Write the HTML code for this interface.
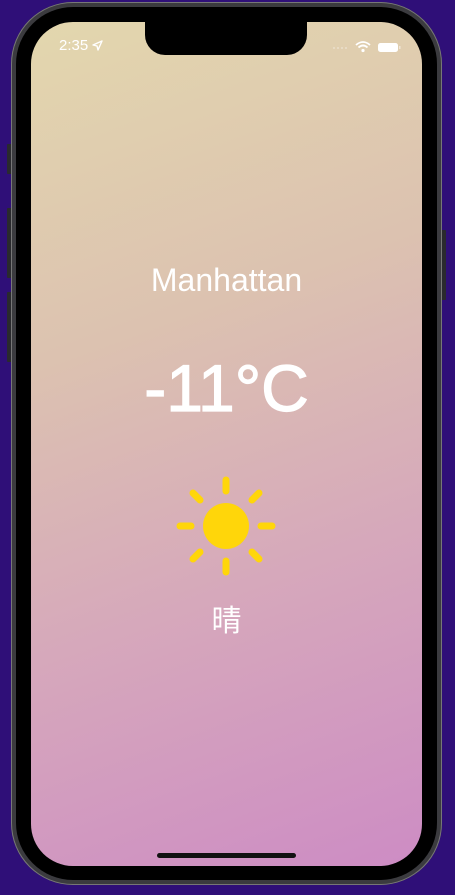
<!DOCTYPE html>
<html><head><meta charset="utf-8"><style>
html,body{margin:0;padding:0}
body{width:455px;height:895px;background:#2f0f78;position:relative;overflow:hidden;font-family:"Liberation Sans","Noto Sans CJK SC",sans-serif}
.btn{position:absolute;background:#2a2a2e;border-radius:1px}
.phone{position:absolute;left:11px;top:2px;width:431px;height:883px;border-radius:62px;background:#3b3b3f;box-shadow:inset 0 0 0 1px #777}
.bezel{position:absolute;left:16px;top:7px;width:421px;height:873px;border-radius:57px;background:#000}
.screen{position:absolute;left:31px;top:22px;width:391px;height:844px;border-radius:42px;overflow:hidden;background:linear-gradient(160deg,#e3d7ae 0%,#dcc2b0 35%,#d6a8bb 65%,#cd8cc4 100%)}
.notch{position:absolute;left:114px;top:0;width:162px;height:33px;background:#000;border-radius:0 0 20px 20px}
.time{position:absolute;left:28px;top:15px;color:#fff;font-size:15px}
.t{position:absolute;left:0;width:391px;text-align:center;color:#fff}
.home{position:absolute;left:126px;bottom:8px;width:139px;height:5px;border-radius:3px;background:#111}
</style></head><body>
<div class="btn" style="left:7px;top:144px;width:5px;height:30px"></div>
<div class="btn" style="left:7px;top:208px;width:5px;height:70px"></div>
<div class="btn" style="left:7px;top:292px;width:5px;height:70px"></div>
<div class="btn" style="left:441px;top:230px;width:5px;height:70px"></div>
<div class="phone"></div>
<div class="bezel"></div>
<div class="screen">
 <div class="notch"></div>
 <div class="time">2:35 <svg width="11" height="11" viewBox="0 0 11 11" style="vertical-align:-1px"><path d="M1 5 L10 1 L6 10 L5 6 Z" fill="none" stroke="#fff" stroke-width="1.4" stroke-linejoin="round"/></svg></div>
 <svg style="position:absolute;left:300px;top:18px" width="80" height="14" viewBox="0 0 80 14">
  <g fill="#fff" opacity=".35"><circle cx="3" cy="8" r="1"/><circle cx="7" cy="8" r="1"/><circle cx="11" cy="8" r="1"/><circle cx="15" cy="8" r="1"/></g>
  <path d="M25 5 Q32 -1 39 5" stroke="#fff" stroke-width="1.8" fill="none"/>
  <path d="M27.5 7.5 Q32 3.5 36.5 7.5" stroke="#fff" stroke-width="1.8" fill="none"/>
  <circle cx="32" cy="10.5" r="1.6" fill="#fff"/>
  <rect x="47" y="3" width="20" height="9" rx="2.5" fill="#fff"/>
  <rect x="68" y="6" width="1.5" height="3" fill="#fff" opacity=".5"/>
 </svg>
 <div class="t" style="top:240px;font-size:32px">Manhattan</div>
 <div class="t" style="top:328px;font-size:66px;-webkit-text-stroke:1.2px #fff">-11°C</div>
 <svg style="position:absolute;left:145px;top:454px" width="100" height="100" viewBox="0 0 100 100">
  <circle cx="50" cy="50" r="23" fill="#ffd60a"/>
  <g stroke="#ffd60a" stroke-width="7" stroke-linecap="round">
   <line x1="50" y1="4" x2="50" y2="15"/><line x1="50" y1="85" x2="50" y2="96"/>
   <line x1="4" y1="50" x2="15" y2="50"/><line x1="85" y1="50" x2="96" y2="50"/>
   <line x1="17" y1="17" x2="24" y2="24"/><line x1="76" y1="76" x2="83" y2="83"/>
   <line x1="83" y1="17" x2="76" y2="24"/><line x1="17" y1="83" x2="24" y2="76"/>
  </g>
 </svg>
 <div class="t" style="top:574px;font-size:30px">晴</div>
 <div class="home"></div>
</div>
</body></html>
